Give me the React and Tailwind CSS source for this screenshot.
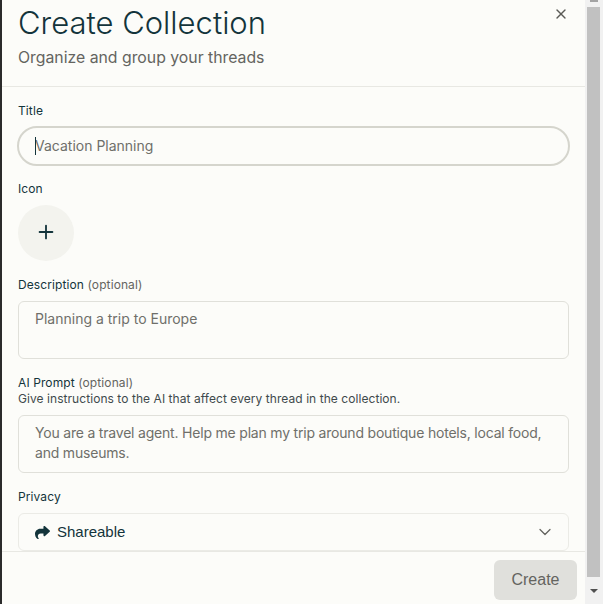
import React from 'react';
import { ChevronDown, Plus, X } from 'lucide-react';

const sans = "font-['Inter','Liberation_Sans',sans-serif]";

function ShareIcon() {
  return (
    <svg className="h-[15px] w-[15px] text-[#13343b]" viewBox="0 0 512 512" fill="currentColor">
      <path d="M307 34.8c-11.5 5.1-19 16.6-19 29.2v64H176C78.8 128 0 206.8 0 304c0 113.3 81.5 163.9 100.2 174.1 2.5 1.4 5.3 1.9 8.1 1.9 10.9 0 19.7-8.9 19.7-19.7 0-7.5-4.3-14.4-9.8-19.5-9.4-8.8-22.2-26.4-22.2-56.7 0-53 43-96 96-96h96v64c0 12.6 7.4 24.1 19 29.2s25 3 34.4-5.4l160-144c6.7-6.1 10.6-14.7 10.6-23.8s-3.8-17.7-10.6-23.8l-160-144c-9.4-8.5-22.9-10.6-34.4-5.4z" />
    </svg>
  );
}

function Label({ children, hint }) {
  return (
    <div className="text-[12px] leading-[16px] tracking-[0.1px] text-[#13343b]">
      {children}
      {hint && <span className="text-[#64645f]"> {hint}</span>}
    </div>
  );
}

function TextBox({ children, className }) {
  return (
    <div className={`mt-[8px] h-[58px] rounded-[6px] border border-[#e0e0da] px-[16px] pt-[7px] text-[14px] leading-[20px] text-[#6f6f6a] ${className}`}>
      {children}
    </div>
  );
}

function Scrollbar() {
  return (
    <div className="flex w-[18px] shrink-0 flex-col bg-[#f1f1f1] pl-[2px]">
      <div className="flex h-[7px] w-[13px] shrink-0 items-start justify-center">
        <div className="h-[2px] w-[8px] bg-[#a3a3a3]" />
      </div>
      <div className="w-[13px] flex-1 bg-[#c1c1c1]" />
      <div className="flex h-[27px] w-[13px] shrink-0 items-center justify-center">
        <div className="h-0 w-0 border-x-[4px] border-t-[4px] border-x-transparent border-t-[#505050]" />
      </div>
    </div>
  );
}

export default function App() {
  return (
    <div className={`flex h-[604px] w-[603px] overflow-hidden bg-[#fcfcf9] ${sans}`}>
      <div className="w-[2px] shrink-0 bg-[#2b2b2b]" />

      <div className="flex min-w-0 flex-1 flex-col">
        {/* Header */}
        <div className="relative h-[87px] shrink-0 border-b border-[#e8e8e3] pl-[16px] pt-[4px]">
          <h1 className="text-[31px] font-light leading-[38px] text-[#13343b]">Create Collection</h1>
          <p className="mt-[5px] text-[15.8px] leading-[22px] text-[#64645f]">Organize and group your threads</p>
          <button className="absolute right-[16px] top-[6px] text-[#5a5a56]">
            <X size={16} strokeWidth={2} />
          </button>
        </div>

        {/* Form */}
        <div className="min-h-0 flex-1 overflow-hidden px-[16px] pt-[16px]">
          <Label>Title</Label>
          <div className="relative -mx-px mt-[7px] flex h-[40px] items-center rounded-full border-2 border-[#d5d5cd] pb-[2px] pl-[16px] text-[14px] text-[#6f6f6a]">
            <span className="absolute left-[16px] top-[9px] h-[18px] w-px bg-[#13343b]" />
            Vacation Planning
          </div>

          <div className="mt-[15px]">
            <Label>Icon</Label>
          </div>
          <div className="mt-[8px] flex h-[56px] w-[56px] items-center justify-center rounded-full bg-[#f3f3ee] pb-[2px] text-[#13343b]">
            <Plus size={22} strokeWidth={2} />
          </div>

          <div className="mt-[16px]">
            <Label hint="(optional)">Description</Label>
          </div>
          <TextBox>Planning a trip to Europe</TextBox>

          <div className="mt-[16px]">
            <Label hint="(optional)">AI Prompt</Label>
          </div>
          <div className="text-[12px] leading-[16px] tracking-[0.06px] text-[#3f4a4c]">
            Give instructions to the AI that affect every thread in the collection.
          </div>
          <TextBox className="tracking-[-0.2px]">
            You are a travel agent. Help me plan my trip around boutique hotels, local food, and museums.
          </TextBox>

          <div className="mt-[16px]">
            <Label>Privacy</Label>
          </div>
          <div className="mt-[8px] flex h-[38px] items-center rounded-[6px] border border-[#ebebe6] pl-[16px] pr-[13px] text-[14px] text-[#13343b]">
            <ShareIcon />
            <span className="ml-[7px] flex-1 font-['Liberation_Sans',sans-serif] text-[15px]">Shareable</span>
            <ChevronDown size={20} strokeWidth={1.5} className="text-[#64645f]" />
          </div>
        </div>

        {/* Footer */}
        <div className="flex h-[53px] shrink-0 justify-end border-t border-[#e8e8e3] pr-[8px] pt-[8px]">
          <button className="h-[40px] w-[83px] rounded-[6px] bg-[#e0e0dc] font-['Liberation_Sans',sans-serif] text-[16px] text-[#64645f]">Create</button>
        </div>
      </div>

      <Scrollbar />
    </div>
  );
}
